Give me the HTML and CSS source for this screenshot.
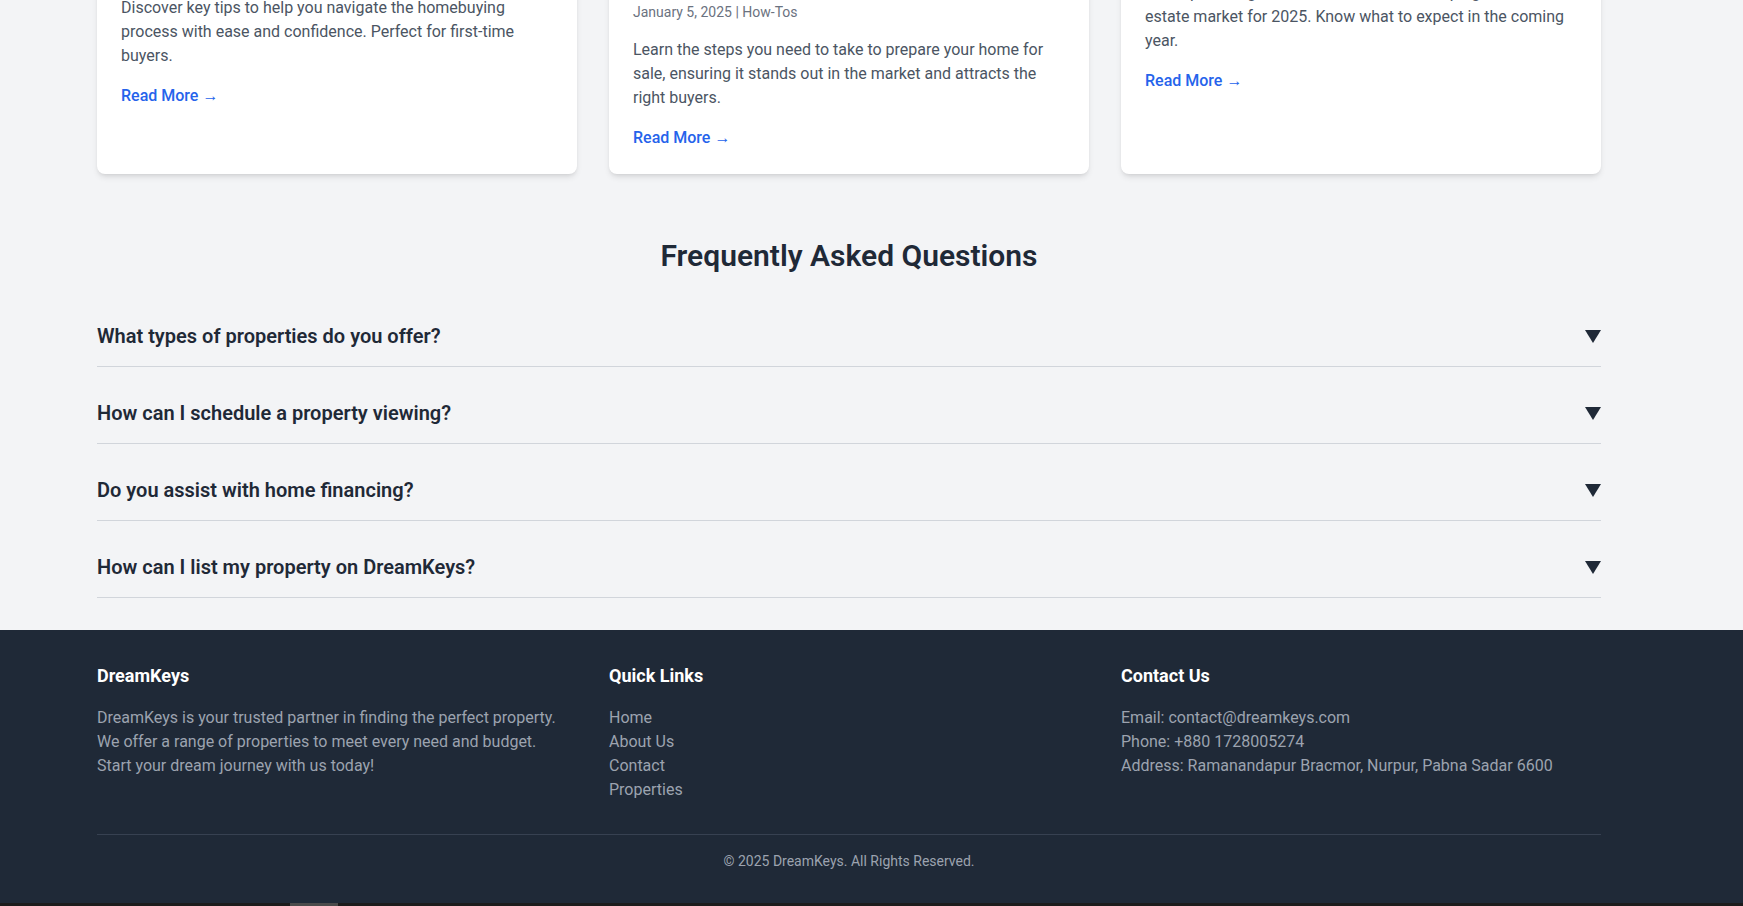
FILE: index.html
```html
<!DOCTYPE html>
<html lang="en">
<head>
<meta charset="utf-8">
<title>DreamKeys</title>
<link rel="stylesheet" href="styles.css">
</head>
<body>
<div class="page">
  <section class="blog">
    <div class="container">
      <div class="cards">
        <article class="card">
          <div class="card-img card-img--one"></div>
          <div class="card-body">
            <h3 class="card-title">Tips for First-Time Homebuyers</h3>
            <p class="card-meta">January 10, 2025 | Guides</p>
            <p class="card-text">Discover key tips to help you navigate the homebuying process with ease and confidence. Perfect for first-time buyers.</p>
            <a class="card-link" href="#">Read More →</a>
          </div>
        </article>
        <article class="card">
          <div class="card-img card-img--two"></div>
          <div class="card-body">
            <h3 class="card-title">How to Prepare Your Home for Sale</h3>
            <p class="card-meta">January 5, 2025 | How-Tos</p>
            <p class="card-text">Learn the steps you need to take to prepare your home for sale, ensuring it stands out in the market and attracts the right buyers.</p>
            <a class="card-link" href="#">Read More →</a>
          </div>
        </article>
        <article class="card">
          <div class="card-img card-img--three"></div>
          <div class="card-body">
            <h3 class="card-title">Real Estate Trends in 2025</h3>
            <p class="card-meta">December 28, 2024 | Market</p>
            <p class="card-text">Get expert insights on the latest trends shaping the real estate market for 2025. Know what to expect in the coming year.</p>
            <a class="card-link" href="#">Read More →</a>
          </div>
        </article>
      </div>
    </div>
  </section>

  <section class="faq">
    <div class="container">
      <h2 class="faq-heading">Frequently Asked Questions</h2>
      <div class="faq-list">
        <div class="faq-item">
          <span class="faq-q">What types of properties do you offer?</span>
          <svg class="faq-arrow" width="16" height="13" viewBox="0 0 16 13"><polygon points="0,0 16,0 8,13"/></svg>
        </div>
        <div class="faq-item">
          <span class="faq-q">How can I schedule a property viewing?</span>
          <svg class="faq-arrow" width="16" height="13" viewBox="0 0 16 13"><polygon points="0,0 16,0 8,13"/></svg>
        </div>
        <div class="faq-item">
          <span class="faq-q">Do you assist with home financing?</span>
          <svg class="faq-arrow" width="16" height="13" viewBox="0 0 16 13"><polygon points="0,0 16,0 8,13"/></svg>
        </div>
        <div class="faq-item">
          <span class="faq-q">How can I list my property on DreamKeys?</span>
          <svg class="faq-arrow" width="16" height="13" viewBox="0 0 16 13"><polygon points="0,0 16,0 8,13"/></svg>
        </div>
      </div>
    </div>
  </section>

  <footer class="footer">
    <div class="container">
      <div class="footer-cols">
        <div class="footer-col">
          <h4 class="footer-title">DreamKeys</h4>
          <p class="footer-text">DreamKeys is your trusted partner in finding the perfect property.<br>We offer a range of properties to meet every need and budget.<br>Start your dream journey with us today!</p>
        </div>
        <div class="footer-col">
          <h4 class="footer-title">Quick Links</h4>
          <ul class="footer-links">
            <li><a href="#">Home</a></li>
            <li><a href="#">About Us</a></li>
            <li><a href="#">Contact</a></li>
            <li><a href="#">Properties</a></li>
          </ul>
        </div>
        <div class="footer-col">
          <h4 class="footer-title">Contact Us</h4>
          <p class="footer-text">Email: contact@dreamkeys.com</p>
          <p class="footer-text">Phone: +880 1728005274</p>
          <p class="footer-text">Address: Ramanandapur Bracmor, Nurpur, Pabna Sadar 6600</p>
        </div>
      </div>
      <div class="footer-bottom">© 2025 DreamKeys. All Rights Reserved.</div>
    </div>
  </footer>
  <div class="hscroll"><div class="hscroll-thumb"></div></div>
</div>
</body>
</html>
```
FILE: styles.css
```css
* { box-sizing: border-box; }
html, body { margin: 0; padding: 0; }
body {
  background: #f3f4f6;
  font-family: Roboto, "Liberation Sans", sans-serif;
  color: #1f2937;
  overflow: hidden;
}
a { text-decoration: none; }
.page { margin-top: -300px; }
.container { width: 1504px; margin-left: 97px; }

/* Blog cards */
.blog { padding-bottom: 32px; }
.cards {
  display: grid;
  grid-template-columns: repeat(3, 1fr);
  gap: 32px;
}
.card {
  background: #fff;
  border-radius: 8px;
  overflow: hidden;
  box-shadow: 0 4px 6px -1px rgba(0,0,0,0.1), 0 2px 4px -2px rgba(0,0,0,0.1);
}
.card-img { background: #cbd5e1; }
.card-img--one { height: 200px; }
.card-img--two { height: 242px; }
.card-img--three { height: 185px; }
.card-body { padding: 24px; }
.card-title {
  margin: 0 0 8px;
  font-size: 20px;
  line-height: 28px;
  font-weight: 600;
  color: #1f2937;
  white-space: nowrap;
}
.card-meta {
  margin: 0 0 16px;
  font-size: 14px;
  line-height: 20px;
  color: #6b7280;
}
.card-text {
  margin: 0 0 16px;
  font-size: 16px;
  line-height: 24px;
  color: #4b5563;
}
.card-link {
  display: inline-block;
  font-size: 16px;
  line-height: 24px;
  font-weight: 500;
  color: #2563eb;
}

/* FAQ */
.faq { padding: 32px 0; }
.faq-heading {
  margin: 0 0 32px;
  text-align: center;
  font-size: 30px;
  line-height: 36px;
  font-weight: 600;
  color: #1f2937;
}
.faq-list { display: flex; flex-direction: column; gap: 16px; }
.faq-item {
  display: flex;
  justify-content: space-between;
  align-items: center;
  padding: 16px 0;
  border-bottom: 1px solid #d1d5db;
}
.faq-q {
  font-size: 20px;
  line-height: 28px;
  font-weight: 600;
  color: #1f2937;
}
.faq-arrow { fill: #1f2937; display: block; }

/* Footer */
.footer {
  background: #1f2937;
  padding: 32px 0;
  color: #9ca3af;
}
.footer-cols {
  display: grid;
  grid-template-columns: repeat(3, 1fr);
  gap: 32px;
}
.footer-title {
  margin: 0 0 16px;
  font-size: 18px;
  line-height: 28px;
  font-weight: 700;
  color: #ffffff;
}
.footer-text {
  margin: 0;
  font-size: 16px;
  line-height: 24px;
  color: #9ca3af;
}
.footer-links { list-style: none; margin: 0; padding: 0; }
.footer-links li { font-size: 16px; line-height: 24px; }
.footer-links a { color: #9ca3af; }
.footer-bottom {
  margin-top: 32px;
  border-top: 1px solid #374151;
  padding-top: 16px;
  text-align: center;
  font-size: 14px;
  line-height: 20px;
  color: #9ca3af;
}
.hscroll {
  height: 3px;
  background: #1c1c1c;
  display: flex;
  padding-left: 290px;
}
.hscroll-thumb { width: 48px; background: #4a4a4a; }
```
